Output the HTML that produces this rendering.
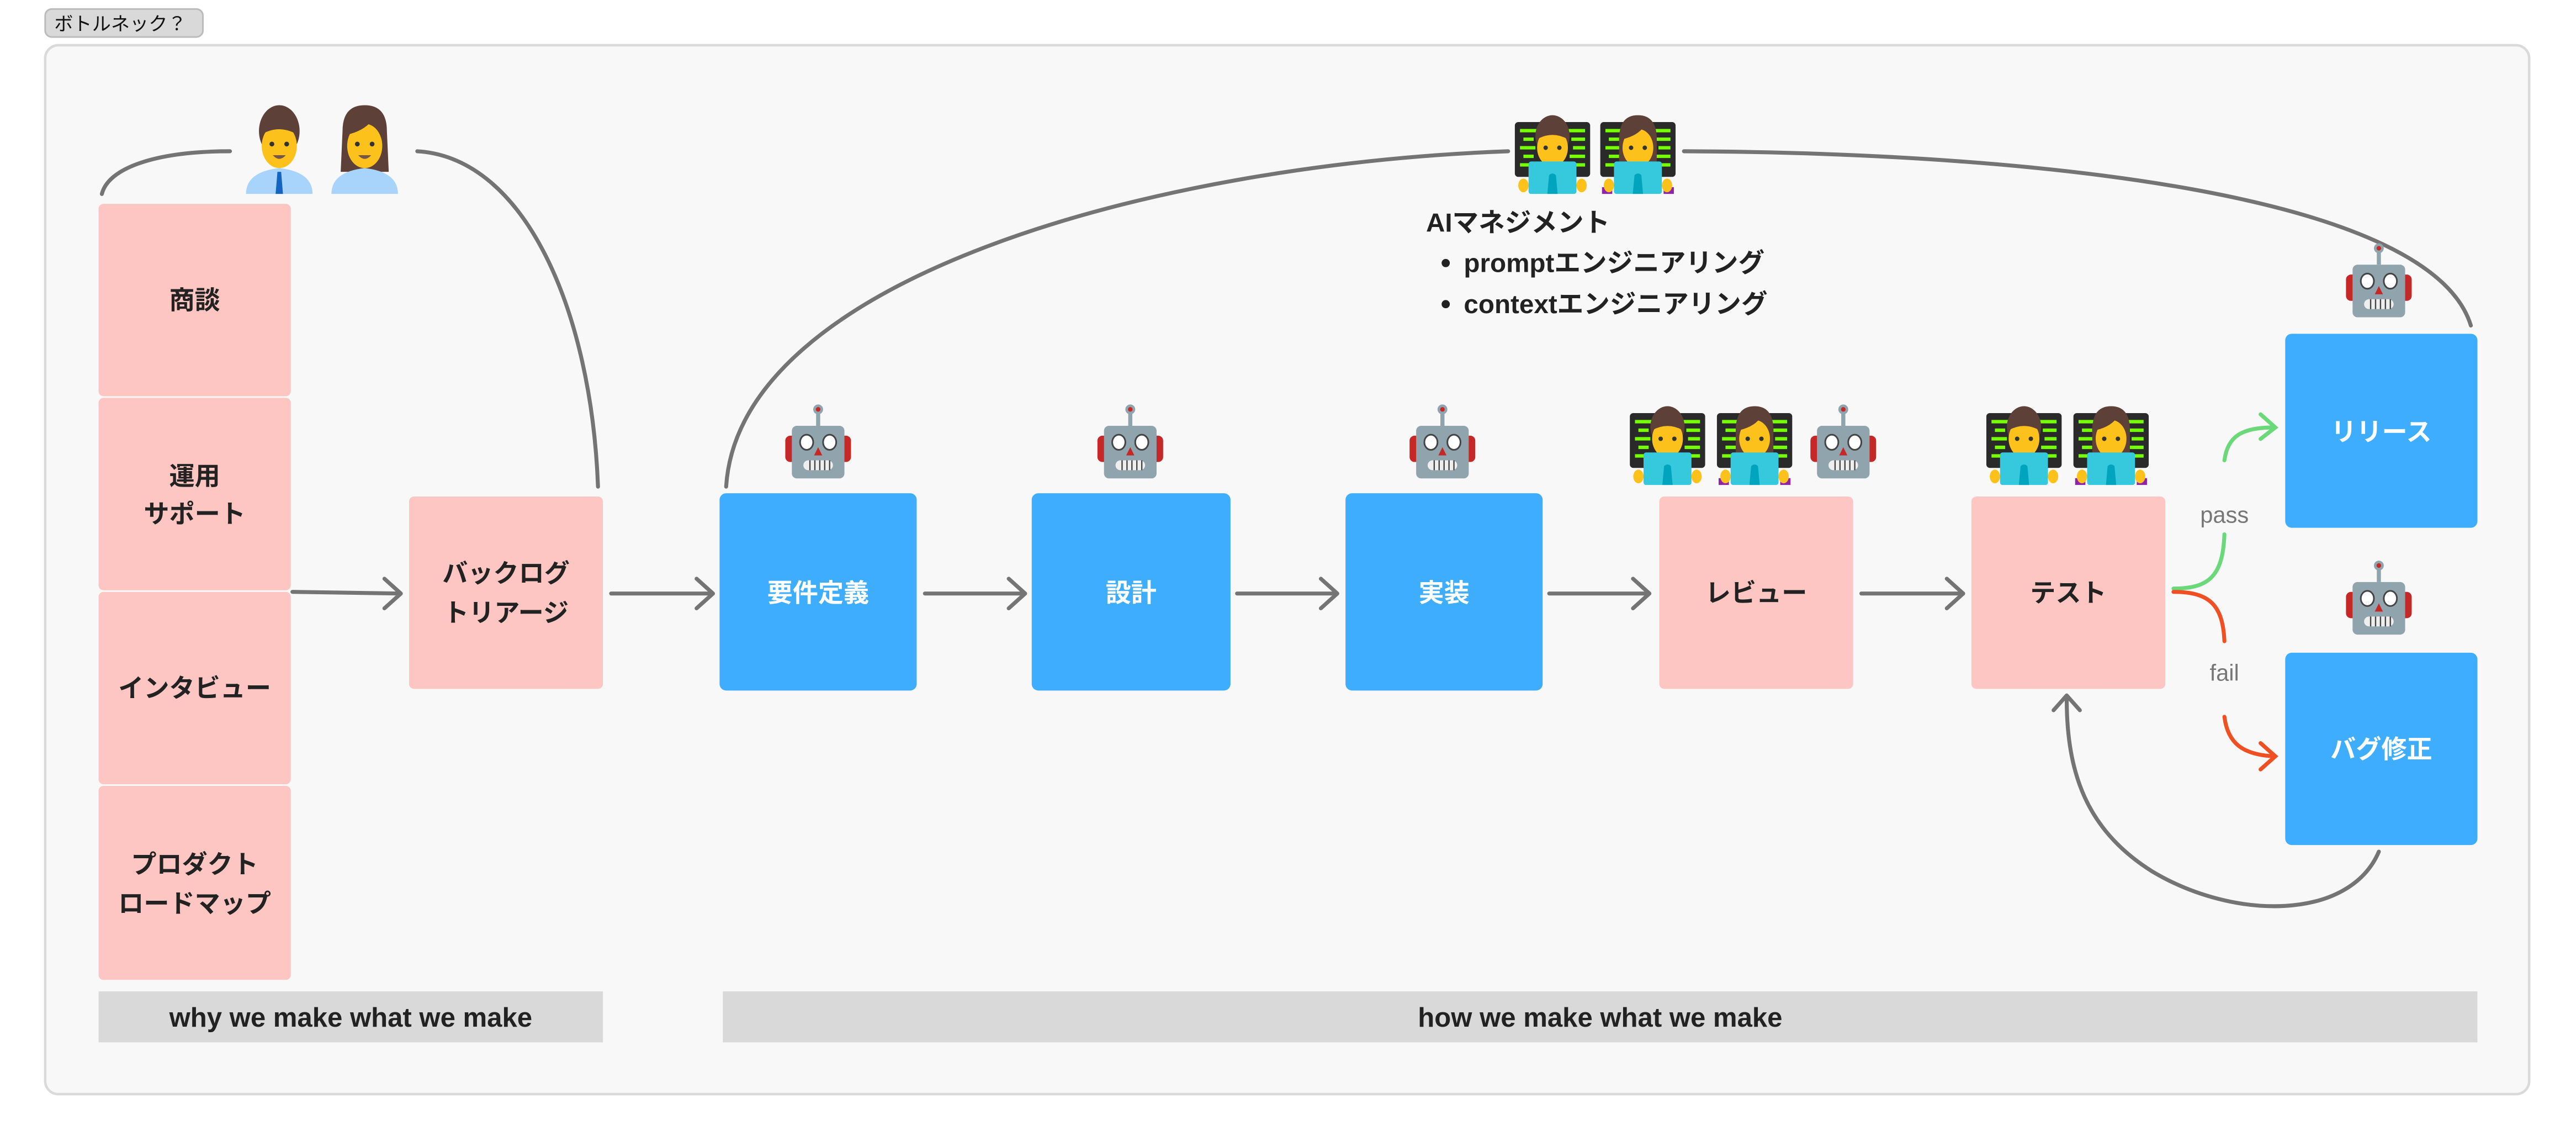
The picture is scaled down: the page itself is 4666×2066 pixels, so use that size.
<!DOCTYPE html>
<html><head><meta charset="utf-8"><style>
html,body{margin:0;padding:0;background:#fff;width:4666px;height:2066px;overflow:hidden}
svg{display:block}
text{font-family:"Liberation Sans","Noto Sans CJK JP",sans-serif}
.b{font-weight:bold;font-size:15.5px;fill:#222}
.w{font-weight:bold;font-size:15.5px;fill:#fff}
</style></head><body>
<svg width="4666" height="2066" viewBox="0 0 1568 694" preserveAspectRatio="none" xmlns="http://www.w3.org/2000/svg">
<defs>
<symbol id="robot" viewBox="0 0 48 48">
<line x1="24" y1="4" x2="24" y2="14" stroke="#90a4ae" stroke-width="2.5"/>
<circle cx="24" cy="4" r="3" fill="#90a4ae"/><circle cx="24" cy="4" r="1.4" fill="#c62828"/>
<rect x="4" y="20" width="40" height="16" rx="3" fill="#c62828"/>
<rect x="8" y="14" width="32" height="32" rx="3" fill="#90a4ae"/>
<ellipse cx="17" cy="24" rx="4" ry="4.6" fill="#fff" stroke="#444" stroke-width="1"/>
<ellipse cx="31" cy="24" rx="4" ry="4.6" fill="#fff" stroke="#444" stroke-width="1"/>
<path d="M24 27 L26.5 32 L21.5 32Z" fill="#c62828"/>
<rect x="15" y="35" width="18" height="6" rx="3" fill="#eee"/>
<path d="M19 35v6M22 35v6M25 35v6M28 35v6M31 35v6" stroke="#444" stroke-width="0.8"/>
</symbol>
<symbol id="man" viewBox="0 0 48 48">
<ellipse cx="24" cy="14" rx="11" ry="14" fill="#5d4037"/>
<ellipse cx="24" cy="22" rx="9.5" ry="12" fill="#fcc21b"/>
<path d="M14 12 Q24 6 34 12 L34 16 Q24 10 14 16Z" fill="#5d4037"/>
<circle cx="20" cy="21" r="1.3" fill="#333"/><circle cx="28" cy="21" r="1.3" fill="#333"/>
<path d="M20.5 27 Q24 31 27.5 27Z" fill="#795548"/>
<path d="M6 48 Q6 36 24 34 Q42 36 42 48Z" fill="#a8d4fb"/>
<path d="M23 36h2l1 12h-4z" fill="#1565c0"/>
</symbol>
<symbol id="woman" viewBox="0 0 48 48">
<path d="M12 14 Q12 0 24 0 Q36 0 36 14 L37 36 L11 36Z" fill="#5d4037"/>
<ellipse cx="24" cy="22" rx="9.5" ry="12" fill="#fcc21b"/>
<path d="M14 16 Q24 14 29 7 Q33 13 34 16 L34 10 Q24 2 14 10Z" fill="#5d4037"/>
<circle cx="20" cy="21" r="1.3" fill="#333"/><circle cx="28" cy="21" r="1.3" fill="#333"/>
<path d="M20.5 27 Q24 31 27.5 27Z" fill="#795548"/>
<path d="M6 48 Q6 36 24 34 Q42 36 42 48Z" fill="#a8d4fb"/>
</symbol>
<symbol id="tech" viewBox="0 0 48 48">
<rect x="2" y="6" width="44" height="32" rx="2" fill="#2a2a2a"/>
<path d="M5 11h10M33 11h10M7 16h6M35 16h8M5 21h9M36 21h7M7 26h6M34 26h9M5 31h10M35 31h8" stroke="#76ff03" stroke-width="2"/>
<ellipse cx="24" cy="14" rx="10" ry="12" fill="#5d4037"/>
<ellipse cx="24" cy="21" rx="9" ry="11" fill="#fcc21b"/>
<path d="M15 12 Q24 6 33 12 L33 16 Q24 11 15 16Z" fill="#5d4037"/>
<circle cx="20" cy="21" r="1.3" fill="#333"/><circle cx="28" cy="21" r="1.3" fill="#333"/>
<ellipse cx="7" cy="43" rx="3" ry="4" fill="#fcc21b"/><ellipse cx="41" cy="43" rx="3" ry="4" fill="#fcc21b"/>
<rect x="10" y="29" width="28" height="19" rx="1.5" fill="#36c8dc"/>
<path d="M21 48 L22 37 Q24 35 26 37 L27 48Z" fill="#00a4bc"/>
</symbol>
<symbol id="techw" viewBox="0 0 48 48">
<rect x="2" y="6" width="44" height="32" rx="2" fill="#2a2a2a"/>
<path d="M5 11h10M33 11h10M7 16h6M35 16h8M5 21h9M36 21h7M7 26h6M34 26h9M5 31h10M35 31h8" stroke="#76ff03" stroke-width="2"/>
<path d="M13 16 Q13 2 24 2 Q35 2 35 16 L35 32 L13 32Z" fill="#5d4037"/>
<ellipse cx="24" cy="21" rx="9" ry="11" fill="#fcc21b"/>
<path d="M15 16 Q24 14 28 8 Q32 13 33 16 L33 10 Q24 3 15 10Z" fill="#5d4037"/>
<circle cx="20" cy="21" r="1.3" fill="#333"/><circle cx="28" cy="21" r="1.3" fill="#333"/>
<rect x="3" y="44" width="6" height="4" fill="#8e24aa"/><rect x="39" y="44" width="6" height="4" fill="#8e24aa"/>
<ellipse cx="7" cy="43" rx="3" ry="4" fill="#fcc21b"/><ellipse cx="41" cy="43" rx="3" ry="4" fill="#fcc21b"/>
<rect x="10" y="29" width="28" height="19" rx="1.5" fill="#36c8dc"/>
<path d="M21 48 L22 37 Q24 35 26 37 L27 48Z" fill="#00a4bc"/>
</symbol>
</defs>

<rect x="27.5" y="5.5" width="96" height="17" rx="4" fill="#d9d9d9" stroke="#bbb" stroke-width="1"/>
<text x="33" y="18.5" font-size="11.5" fill="#111">ボトルネック？</text>

<rect x="27.5" y="27.5" width="1512" height="638" rx="8" fill="#f8f8f8" stroke="#dadada" stroke-width="1.5"/>

<g fill="#fdc6c2">
<rect x="60" y="124" width="117" height="117" rx="3"/>
<rect x="60" y="242" width="117" height="117" rx="3"/>
<rect x="60" y="360" width="117" height="117" rx="3"/>
<rect x="60" y="478" width="117" height="118" rx="3"/>
<rect x="249" y="302" width="118" height="117" rx="3"/>
<rect x="1010" y="302" width="118" height="117" rx="3"/>
<rect x="1200" y="302" width="118" height="117" rx="3"/>
</g>
<g fill="#3fadfd">
<rect x="438" y="300" width="120" height="120" rx="4"/>
<rect x="628" y="300" width="121" height="120" rx="4"/>
<rect x="819" y="300" width="120" height="120" rx="4"/>
<rect x="1391" y="203" width="117" height="118" rx="4"/>
<rect x="1391" y="397" width="117" height="117" rx="4"/>
</g>

<g class="b" text-anchor="middle">
<text x="118.5" y="188">商談</text>
<text x="118.5" y="295">運用</text>
<text x="118.5" y="318">サポート</text>
<text x="118.5" y="424">インタビュー</text>
<text x="118.5" y="531">プロダクト</text>
<text x="118.5" y="555">ロードマップ</text>
<text x="308" y="354">バックログ</text>
<text x="308" y="378">トリアージ</text>
<text x="1069" y="366">レビュー</text>
<text x="1259" y="366">テスト</text>
</g>
<g class="w" text-anchor="middle">
<text x="498" y="366">要件定義</text>
<text x="688.5" y="366">設計</text>
<text x="879" y="366">実装</text>
<text x="1449.5" y="268">リリース</text>
<text x="1449.5" y="461">バグ修正</text>
</g>

<rect x="60" y="603" width="307" height="31" fill="#d9d9d9"/>
<rect x="440" y="603" width="1068" height="31" fill="#d9d9d9"/>
<text x="213.5" y="624.5" font-size="16.5" font-weight="bold" fill="#222" text-anchor="middle">why we make what we make</text>
<text x="974" y="624.5" font-size="16.5" font-weight="bold" fill="#222" text-anchor="middle">how we make what we make</text>

<g fill="none" stroke="#747474" stroke-width="2.4" stroke-linecap="round" stroke-linejoin="round">
<path d="M178 360 L243 361 M234 352 L244 361 L234 370"/>
<path d="M372 361 L433 361 M424 352 L434 361 L424 370"/>
<path d="M563 361 L623 361 M614 352 L624 361 L614 370"/>
<path d="M753 361 L813 361 M804 352 L814 361 L804 370"/>
<path d="M943 361 L1003 361 M994 352 L1004 361 L994 370"/>
<path d="M1133 361 L1194 361 M1185 352 L1195 361 L1185 370"/>
<path d="M62 118 C66 102 95 92 140 92"/>
<path d="M254 92 C320 96 360 190 364 296"/>
<path d="M442 296 C450 170 700 100 918 92"/>
<path d="M1025 92 C1250 93 1480 120 1504 198"/>
<path d="M1448 518 C1430 560 1360 560 1310 530 C1270 505 1258 470 1258 425 M1250 432 L1258 423 L1266 432"/>
</g>
<path d="M1323 358 C1345 358 1353 350 1354 325 M1354 280 C1356 265 1365 260 1384 260 M1376 252 L1385 260 L1376 267" fill="none" stroke="#6bd87a" stroke-width="2.4" stroke-linecap="round"/>
<path d="M1323 360 C1345 360 1353 368 1354 390 M1354 436 C1356 452 1365 459 1384 460 M1376 452 L1385 460 L1376 468" fill="none" stroke="#f04e23" stroke-width="2.4" stroke-linecap="round"/>
<text x="1354" y="318" font-size="14" fill="#777" text-anchor="middle">pass</text>
<text x="1354" y="414" font-size="14" fill="#777" text-anchor="middle">fail</text>

<text x="868" y="141" font-size="16" font-weight="bold" fill="#222">AIマネジメント</text>
<circle cx="880" cy="160" r="2.5" fill="#222"/>
<circle cx="880" cy="185" r="2.5" fill="#222"/>
<text x="891" y="165.5" font-size="16" font-weight="bold" fill="#222">promptエンジニアリング</text>
<text x="891" y="190.5" font-size="16" font-weight="bold" fill="#222">contextエンジニアリング</text>

<use href="#man" x="143" y="64" width="54" height="54"/>
<use href="#woman" x="195" y="64" width="54" height="54"/>
<use href="#tech" x="920" y="68" width="50" height="50"/>
<use href="#techw" x="972" y="68" width="50" height="50"/>
<use href="#robot" x="474" y="245" width="48" height="48"/>
<use href="#robot" x="664" y="245" width="48" height="48"/>
<use href="#robot" x="854" y="245" width="48" height="48"/>
<use href="#tech" x="990" y="245" width="50" height="50"/>
<use href="#techw" x="1043" y="245" width="50" height="50"/>
<use href="#robot" x="1098" y="245" width="48" height="48"/>
<use href="#tech" x="1207" y="245" width="50" height="50"/>
<use href="#techw" x="1260" y="245" width="50" height="50"/>
<use href="#robot" x="1424" y="147" width="48" height="48"/>
<use href="#robot" x="1424" y="340" width="48" height="48"/>
</svg>
</body></html>
